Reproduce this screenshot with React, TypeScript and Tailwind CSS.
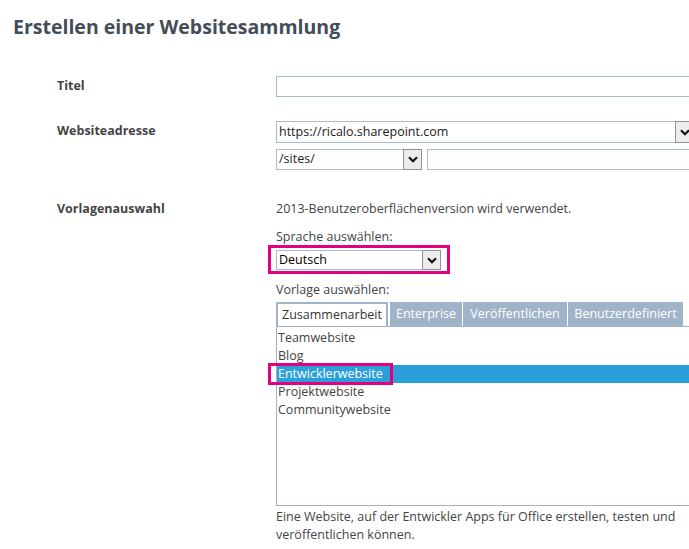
import React from 'react';

const font = { fontFamily: '"Open Sans", "Noto Sans", Arial, sans-serif' };

function Chevron() {
  return (
    <svg width="10" height="7" viewBox="0 0 10 7" className="block">
      <path d="M1 1.2 L5 5.2 L9 1.2" fill="none" stroke="#111" strokeWidth="2.2" />
    </svg>
  );
}

function ArrowButton({ className = '' }: { className?: string }) {
  return (
    <div
      className={`flex-none w-[19px] self-stretch flex items-center justify-center border border-[#8d9297] bg-[#ececec] ${className}`}
    >
      <Chevron />
    </div>
  );
}

function Select({ value, className = '', textClass = 'text-[#222]' }: { value: string; className?: string; textClass?: string }) {
  return (
    <div className={`flex items-stretch border border-[#a9bccf] bg-white ${className}`}>
      <div className={`flex-1 flex items-center pl-[2px] text-[12.5px] truncate ${textClass}`}>{value}</div>
      <ArrowButton className="-my-px -mr-px" />
    </div>
  );
}

const tabs = ['Enterprise', 'Veröffentlichen', 'Benutzerdefiniert'];
const tabWidths = ['w-[72px]', 'w-[104px]', 'w-[115px]'];
const templates = ['Teamwebsite', 'Blog', 'Entwicklerwebsite', 'Projektwebsite', 'Communitywebsite'];

export default function App() {
  return (
    <div className="w-[689px] h-[549px] overflow-hidden bg-white text-[#444]" style={font}>
      <div className="pt-[14px] pl-[13px] text-[19.5px] leading-[26px] font-bold text-[#444d57]">
        Erstellen einer Websitesammlung
      </div>

      <div className="mt-[36px] flex pl-[57px]">
        <div className="w-[219px] flex-none text-[12.5px] font-bold leading-[19px]">Titel</div>
        <div className="flex-1 h-[21px] border border-[#a9bccf] border-r-0" />
      </div>

      <div className="mt-[24px] flex pl-[57px]">
        <div className="w-[219px] flex-none text-[12.5px] font-bold leading-[19px]">Websiteadresse</div>
        <div className="flex-1 flex flex-col gap-[6px]">
          <Select value="https://ricalo.sharepoint.com" className="h-[22px] w-[418px]" />
          <div className="flex gap-[5px]">
            <Select value="/sites/" className="h-[21px] w-[146px]" />
            <div className="flex-1 h-[21px] border border-[#a9bccf] border-r-0" />
          </div>
        </div>
      </div>

      <div className="mt-[30px] flex pl-[57px]">
        <div className="w-[219px] flex-none text-[12.5px] font-bold leading-[18px]">Vorlagenauswahl</div>
        <div className="flex-1 flex flex-col text-[12.5px]">
          <div className="leading-[18px]">2013-Benutzeroberflächenversion wird verwendet.</div>
          <div className="mt-[11px] leading-[16px]">Sprache auswählen:</div>
          <div className="-ml-[8px] w-[182px] border-[3px] border-[#e5007e] pl-[5px] pr-[6px] pt-[2px] pb-[1px]">
            <Select value="Deutsch" className="h-[20px]" textClass="text-black" />
          </div>
          <div className="mt-[8px] leading-[16px]">Vorlage auswählen:</div>
          <div className="mt-[4px] flex h-[24px] gap-[1px]">
            <div className="w-[112px] mr-[1px] flex items-center justify-center border-2 border-b-0 border-[#9fb4c8] bg-white text-[#333]">
              Zusammenarbeit
            </div>
            {tabs.map((t, i) => (
              <div
                key={t}
                className={`${tabWidths[i]} flex items-center justify-center bg-[#9fb4c8] text-white`}
              >
                {t}
              </div>
            ))}
          </div>
          <div className="h-[180px] border border-[#9fb4c8] border-r-0 pt-[2px]">
            {templates.map((t) => {
              const sel = t === 'Entwicklerwebsite';
              return (
                <div
                  key={t}
                  className={`relative h-[18px] leading-[18px] pl-[1px] ${sel ? 'bg-[#2a9fd9] text-white' : 'text-[#444]'}`}
                >
                  {t}
                  {sel && (
                    <div className="absolute -left-[9px] -top-[2px] w-[125px] h-[22px] border-[3px] border-[#e5007e]" />
                  )}
                </div>
              );
            })}
          </div>
          <div className="mt-[2px] leading-[18px] w-[412px]">
            Eine Website, auf der Entwickler Apps für Office erstellen, testen und veröffentlichen können.
          </div>
        </div>
      </div>
    </div>
  );
}
